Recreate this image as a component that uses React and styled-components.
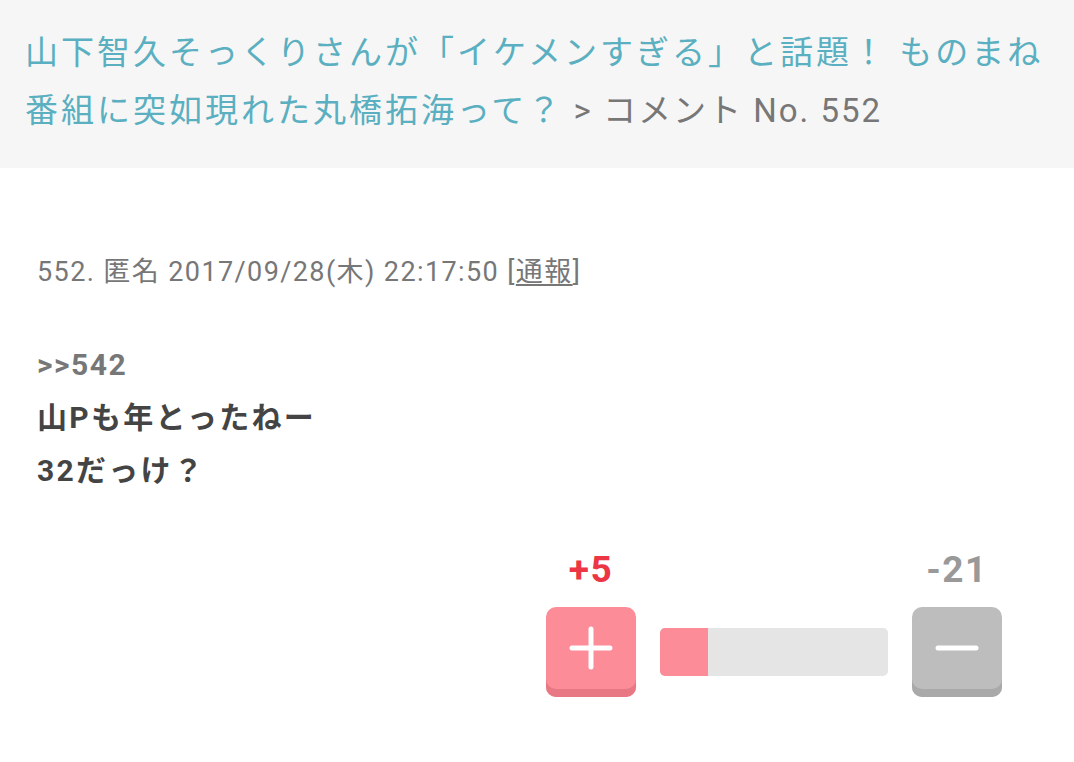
import React from 'react';
import styled, { createGlobalStyle } from 'styled-components';

const GlobalStyle = createGlobalStyle`
  html, body {
    margin: 0;
    padding: 0;
    background: #ffffff;
  }
  body {
    font-family: Roboto, "Noto Sans CJK JP", sans-serif;
  }
`;

const Header = styled.header`
  background: #f6f6f6;
  height: 168px;
  box-sizing: border-box;
  padding: 24px 0 0 25px;
`;

const Title = styled.h1`
  margin: 0;
  font-size: 33px;
  font-weight: 400;
  line-height: 58px;
  letter-spacing: 3px;
  color: #5aafc0;
`;

const Crumb = styled.span`
  color: #777777;
  letter-spacing: 2px;
`;

const Comment = styled.article`
  padding: 88px 37px 0;
`;

const Meta = styled.div`
  font-size: 27px;
  line-height: 32px;
  letter-spacing: 1.4px;
  color: #777777;
  margin-bottom: 50px;
`;

const Report = styled.span`
  text-decoration: underline;
  text-underline-offset: 3px;
`;

const Body = styled.div`
  font-size: 30px;
  line-height: 53px;
  font-weight: 700;
  letter-spacing: 2.3px;
  color: #444444;
`;

const Anchor = styled.div`
  color: #777777;
  letter-spacing: 1.5px;
`;

const Votes = styled.div`
  display: flex;
  justify-content: flex-end;
  align-items: flex-end;
  gap: 24px;
  padding: 55px 72px 0 0;
`;

const VoteCol = styled.div`
  display: flex;
  flex-direction: column;
  align-items: center;
  gap: 19px;
`;

const Count = styled.div`
  font-size: 37px;
  line-height: 36px;
  font-weight: 700;
  letter-spacing: 1.5px;
  color: ${p => p.$color};
`;

const VoteButton = styled.button`
  width: 90px;
  height: 90px;
  border: none;
  padding: 0 0 8px;
  border-radius: 10px;
  background: ${p => p.$bg};
  box-shadow: inset 0 -8px 0 ${p => p.$shade};
  display: flex;
  align-items: center;
  justify-content: center;
  cursor: pointer;
`;

const Bar = styled.div`
  width: 228px;
  height: 48px;
  border-radius: 5px;
  background: #e5e5e5;
  overflow: hidden;
  margin-bottom: 21px;
`;

const BarFill = styled.div`
  height: 100%;
  background: #fc8c98;
`;

function PlusIcon() {
  return (
    <svg width="44" height="44" viewBox="0 0 44 44">
      <path d="M22 3v38M3 22h38" stroke="#fff" strokeWidth="5" strokeLinecap="round" />
    </svg>
  );
}

function MinusIcon() {
  return (
    <svg width="44" height="44" viewBox="0 0 44 44">
      <path d="M3 22h38" stroke="#fff" strokeWidth="5" strokeLinecap="round" />
    </svg>
  );
}

export default function App() {
  const plus = 5;
  const minus = 21;
  const share = 48 / 228;

  return (
    <>
      <GlobalStyle />
      <Header>
        <Title>
          山下智久そっくりさんが「イケメンすぎる」と話題！ ものまね番組に突如現れた丸橋拓海って？
          <Crumb> &gt; コメント No. 552</Crumb>
        </Title>
      </Header>
      <Comment>
        <Meta>
          552. 匿名 2017/09/28(木) 22:17:50 [<Report>通報</Report>]
        </Meta>
        <Body>
          <Anchor>&gt;&gt;542</Anchor>
          <div>山Pも年とったねー</div>
          <div>32だっけ？</div>
        </Body>
      </Comment>
      <Votes>
        <VoteCol>
          <Count $color="#ec3545">+{plus}</Count>
          <VoteButton $bg="#fc8c98" $shade="#e87884"><PlusIcon /></VoteButton>
        </VoteCol>
        <Bar>
          <BarFill style={{ width: `${share * 100}%` }} />
        </Bar>
        <VoteCol>
          <Count $color="#999999">-{minus}</Count>
          <VoteButton $bg="#bdbdbd" $shade="#a9a9a9"><MinusIcon /></VoteButton>
        </VoteCol>
      </Votes>
    </>
  );
}
